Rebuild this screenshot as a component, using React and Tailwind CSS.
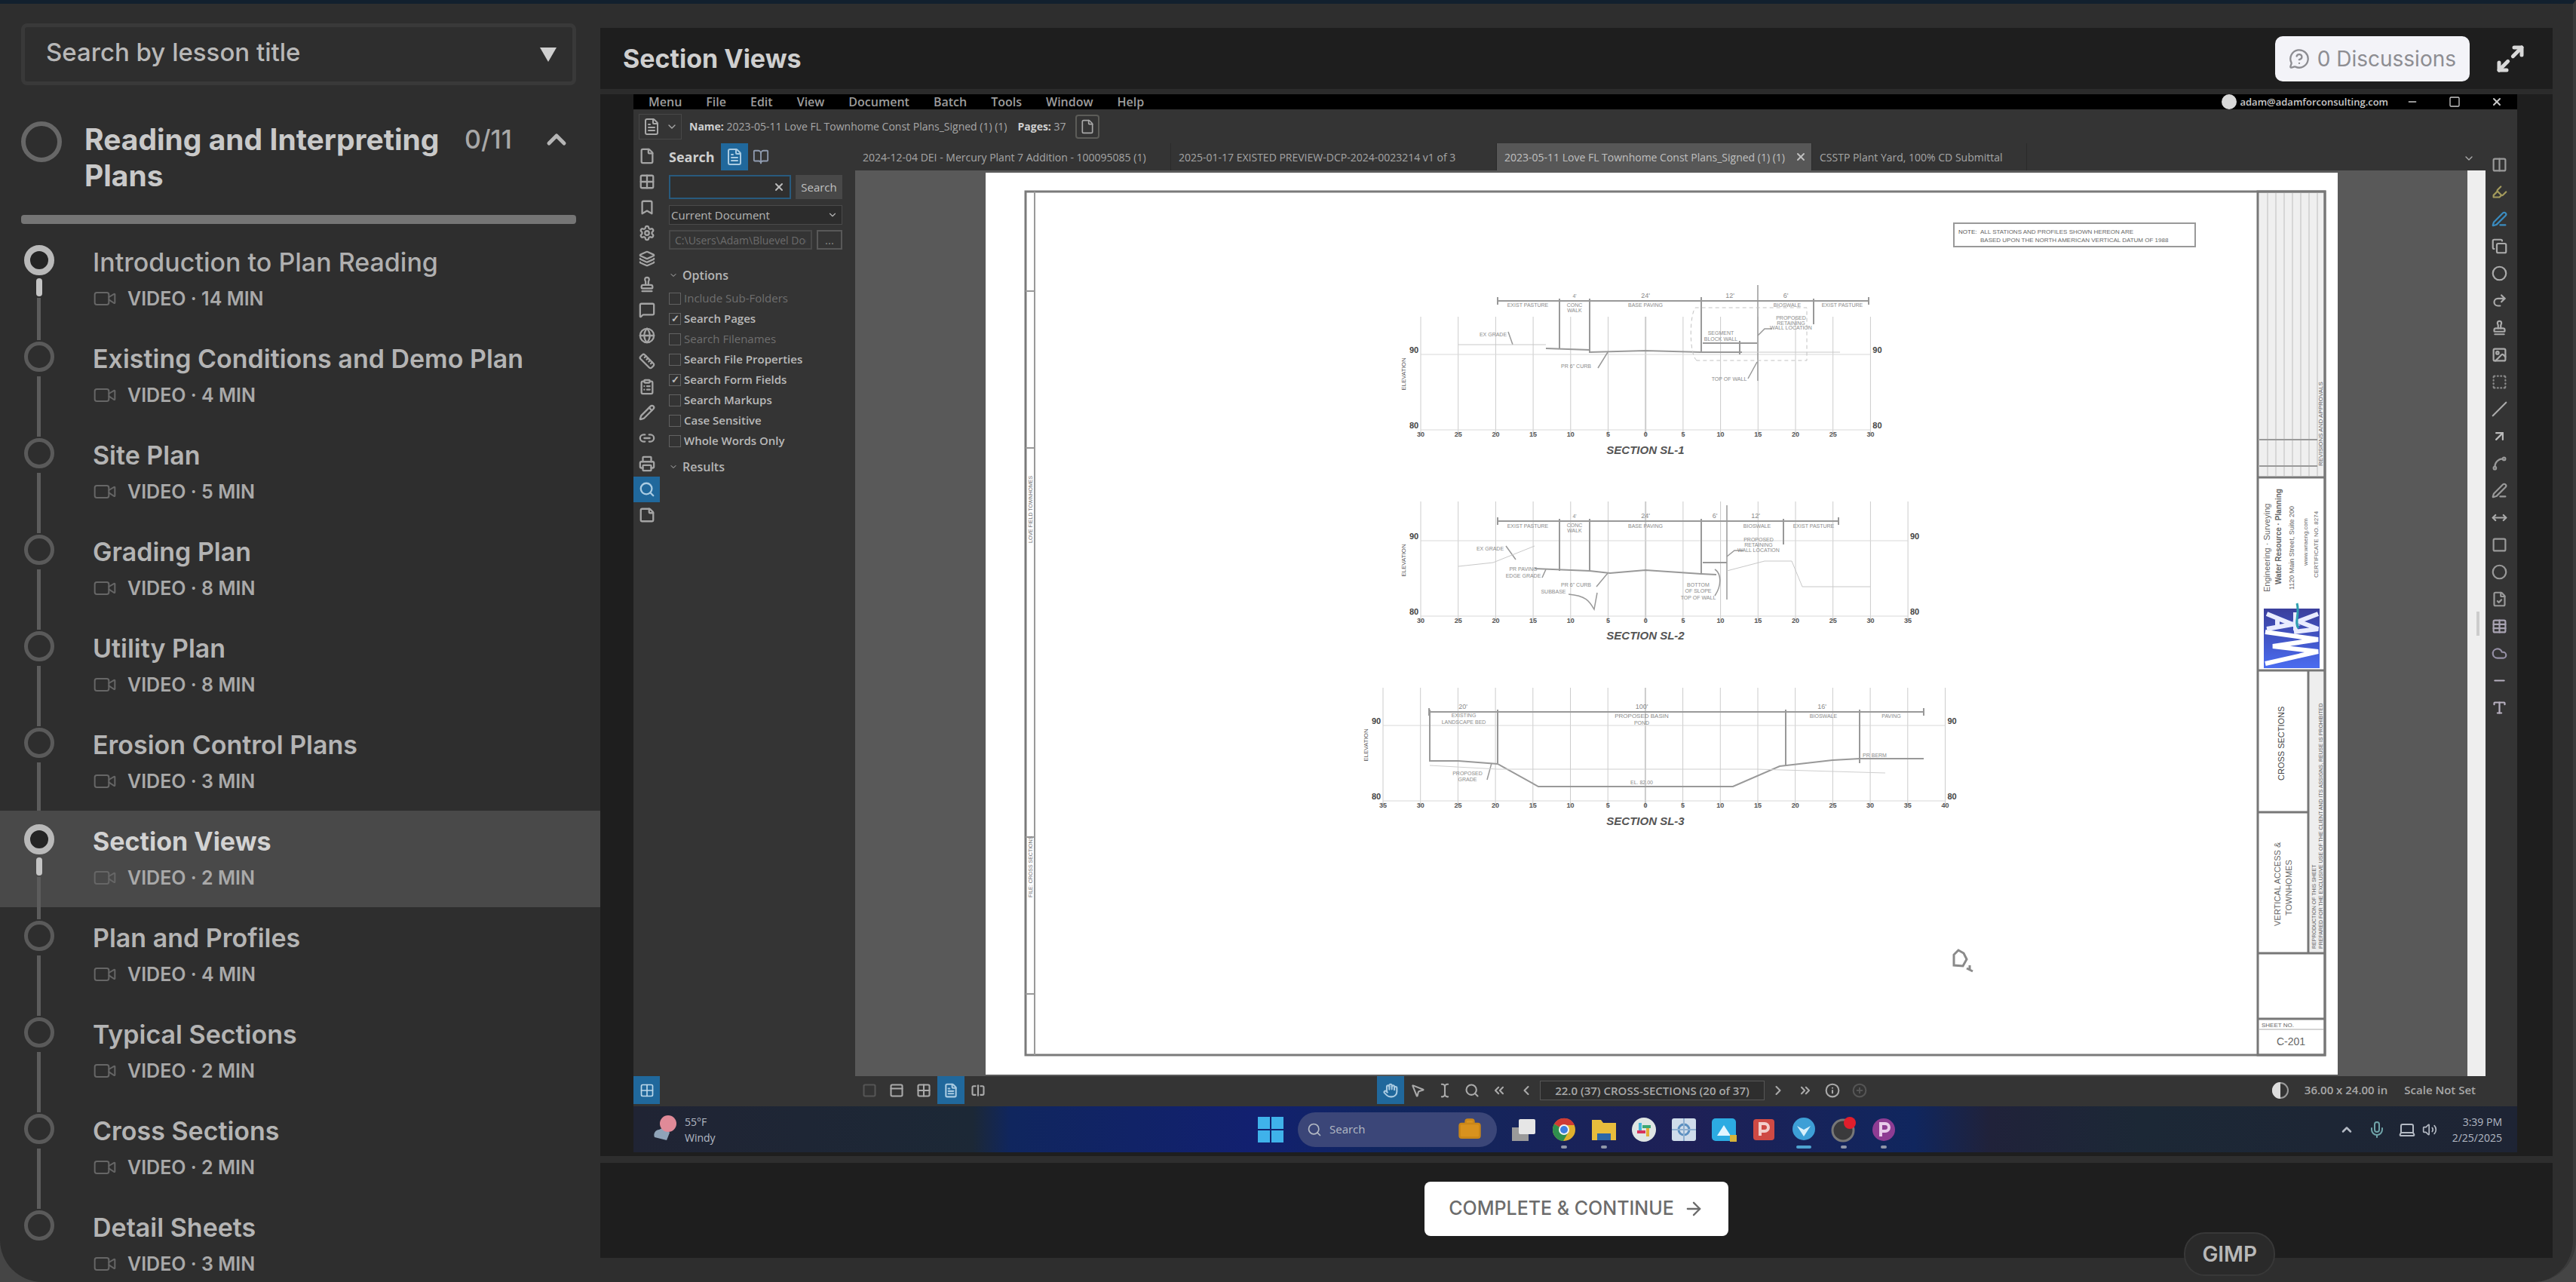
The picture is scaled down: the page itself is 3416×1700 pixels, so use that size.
import React from "react";
import {
  ChevronUp, ChevronDown, Video, ArrowRight, MessageCircleQuestionMark, Maximize2, FileText, File, BookOpen, Grid2x2, Bookmark,
  Layers, Link2, Stamp, MessageSquare, Globe, Ruler, ClipboardList, Pencil, Square, Table, Search, Settings, CirclePlus,
  StickyNote, Highlighter, PenLine, Copy, Circle, Redo2, Image, SquareDashed, Slash, ArrowUpRight, Spline,
  MoveHorizontal, Cloud, FileCheck, Type, Minus, X, Columns2, MousePointer2, TextCursor, ChevronsLeft, ChevronsRight,
  ChevronLeft, ChevronRight, Mic, Laptop, Volume2, Info, Hand, PanelTop, SquareSplitHorizontal, Briefcase, Printer,
} from "lucide-react";

const lessons = [
  ["Introduction to Plan Reading", 14],
  ["Existing Conditions and Demo Plan", 4],
  ["Site Plan", 5],
  ["Grading Plan", 8],
  ["Utility Plan", 8],
  ["Erosion Control Plans", 3],
  ["Section Views", 2],
  ["Plan and Profiles", 4],
  ["Typical Sections", 2],
  ["Cross Sections", 2],
  ["Detail Sheets", 3],
];

function Lesson({ title, minutes, index }) {
  const active = title === "Section Views";
  const bright = active || index === 0;
  const last = index === lessons.length - 1;
  return (
    <li>
      <a href="#lesson" className={"relative flex h-32 gap-[51px] pl-8 " + (active ? "bg-[#494949]" : "")}>
        <span className="flex w-10 shrink-0 flex-col items-center pt-[18px]">
          <span className={"h-10 w-10 shrink-0 rounded-full " + (bright ? "border-8 border-[#b9b9b9] bg-[#242424]" : "border-[5px] border-[#5a5a5a]")} />
          {bright && <span className="mt-1 h-6 w-2 shrink-0 rounded-full bg-[#c4c4c4]" />}
        </span>
        {!last && <span className={"absolute left-[49px] w-[5px] bg-[#5c5c5c] " + (bright ? "top-[88px] h-[56px]" : "top-[64px] h-[80px]")} />}
        <span className="flex flex-col pt-[21px]">
          <span className={"text-[34px] leading-10 " + (active ? "font-bold text-[#d2d2d2]" : index === 0 ? "font-medium text-[#b0b0b0]" : "font-semibold text-[#b4b4b4]")}>{title}</span>
          <span className="mt-2 flex items-center gap-[14px] text-[25px] leading-10 font-semibold text-[#a9a9a9]">
            <Video className="h-8 w-8 text-[#666]" strokeWidth={1.5} />
            <span>VIDEO · {minutes} MIN</span>
          </span>
        </span>
      </a>
    </li>
  );
}

function Sidebar() {
  return (
    <aside className="flex w-[796px] shrink-0 flex-col overflow-hidden pt-[26px]">
      <div className="relative mr-8 ml-7 h-[82px] shrink-0">
        <select aria-label="Search by lesson title" className="h-full w-full appearance-none rounded-lg border-[5px] border-[#393939] bg-transparent pb-1 pl-7 text-[33px] font-medium text-[#b8b8b8]">
          <option>Search by lesson title</option>
        </select>
        <svg className="pointer-events-none absolute top-[30px] right-[25px] h-6 w-6" viewBox="0 0 24 24"><path d="M1 2h22L12 21z" fill="#cfcfcf" /></svg>
      </div>
      <div className="mt-12 flex shrink-0 items-start pr-8 pl-7">
        <span className="h-[54px] w-[54px] shrink-0 rounded-full border-[6px] border-[#676767]" />
        <h2 className="ml-[30px] w-[500px] text-[39px] leading-[48px] font-bold text-[#c9c9c9]">Reading and Interpreting Plans</h2>
        <span className="ml-1 text-[34px] leading-[48px] font-medium text-[#a8a8a8]">0/11</span>
        <button aria-label="Collapse section" className="mt-1 mr-1.5 ml-auto text-[#b5b5b5]"><ChevronUp className="h-10 w-10" strokeWidth={3} /></button>
      </div>
      <div className="mr-8 ml-7 mt-7 h-3 shrink-0 rounded bg-[#757575]" />
      <ul className="mt-2.5">
        {lessons.map(([t, m], i) => <Lesson key={t} title={t} minutes={m} index={i} />)}
      </ul>
    </aside>
  );
}

/* ---------- drawing sheet ---------- */

const xs = (from, n) => Array.from({ length: n }, (_, i) => from + i * 49.7);

function Tiny({ x, y, children, size = 7, anchor = "middle", fill = "#8a8a8a" }) {
  return <text x={x} y={y} fontSize={size} textAnchor={anchor} fill={fill}>{children}</text>;
}

function SectionGrid({ x0, n, top, bottom, refY, name, titleY }) {
  const grid = xs(x0, n);
  const right = grid[n - 1];
  return (
    <g>
      {grid.map((x, i) => (
        <g key={i}>
          <line x1={x} x2={x} y1={top} y2={bottom + 8} stroke="#cccccc" strokeWidth={x > 2180 && x < 2184 ? 2 : 1} />
          <text x={x} y={bottom + 9} fontSize="9" fontWeight="bold" textAnchor="middle" fill="#555">{Math.abs(Math.round((x - 2182) / 49.7)) * 5}</text>
        </g>
      ))}
      <path d={`M${x0} ${refY}H${right}M${x0} ${bottom}H${right}`} stroke="#d8d8d8" fill="none" />
      {[refY, bottom].map((y) => (
        <g key={y} fontSize="11" fontWeight="bold" fill="#444" textAnchor="middle">
          <text x={x0 - 9} y={y - 2}>{y === bottom ? "80" : "90"}</text>
          <text x={right + 9} y={y - 2}>{y === bottom ? "80" : "90"}</text>
        </g>
      ))}
      <text transform={`translate(${x0 - 20} ${(refY + bottom) / 2 - 24}) rotate(-90)`} fontSize="8" textAnchor="middle" fill="#555">ELEVATION</text>
      <text x="2182" y={titleY} fontSize="15" fontWeight="bold" fontStyle="italic" textAnchor="middle" fill="#555">{name}</text>
    </g>
  );
}

function Sheet() {
  return (
    <svg className="h-full max-w-full" viewBox="1307 229 1793 1196" fontFamily="Liberation Sans, sans-serif" role="img" aria-label="Cross section sheet">
      <rect x="1307" y="229" width="1793" height="1196" fill="#fff" />
      <rect x="1360" y="254" width="1723" height="1145" fill="none" stroke="#7a7a7a" strokeWidth="3" />
      <path d="M1372 254V1399M1360 386H1372M1360 594H1372M1360 1110H1372M1360 1318H1372" stroke="#999" strokeWidth="2" />
      <text transform="translate(1369 1190) rotate(-90)" fontSize="7" fill="#777">FILE: CROSS SECTIONS</text>
      <text transform="translate(1369 720) rotate(-90)" fontSize="7" fill="#777">LOVE FIELD TOWNHOMES</text>

      <rect x="2591" y="296" width="320" height="31" fill="none" stroke="#999" strokeWidth="2" />
      <Tiny x={2597} y={310} size={8} anchor="start" fill="#555">NOTE:</Tiny>
      <Tiny x={2626} y={310} size={8} anchor="start" fill="#666">ALL STATIONS AND PROFILES SHOWN HEREON ARE</Tiny>
      <Tiny x={2626} y={321} size={8} anchor="start" fill="#666">BASED UPON THE NORTH AMERICAN VERTICAL DATUM OF 1988</Tiny>

      {/* section 1 */}
      <SectionGrid x0={1884} n={13} top={420} bottom={570} refY={470} name="SECTION SL-1" titleY={602} />
      <g fill="none" stroke="#999" strokeWidth="2">
        <path d="M1986 399H2478M1986 394v10M2478 394v10M2256 394v10" />
        <path d="M2068 396V462M2108 396V467M2256 396V467M2405 396V430" />
        <path d="M2331 378V505" strokeWidth="1.5" />
        <path d="M2050 462L2108 464L2108 467L2182 465L2256 467H2310" />
        <path d="M2258 455H2330M2307 452V470" />
        <path d="M2000 440L2006 457M2119 488L2132 467M2318 502L2330 480M2331 445L2340 436H2350" strokeWidth="1.5" />
      </g>
      <path d="M1934 457H2050M2310 467H2440" stroke="#c8c8c8" fill="none" />
      <path d="M2250 478C2240 470 2240 420 2248 408H2396V478Z" stroke="#c2c2c2" strokeDasharray="5 4" fill="none" />
      <Tiny x={2026} y={407}>EXIST PASTURE</Tiny><Tiny x={2088} y={395}>4'</Tiny><Tiny x={2088} y={407}>CONC</Tiny><Tiny x={2088} y={414}>WALK</Tiny>
      <Tiny x={2182} y={395} size={9}>24'</Tiny><Tiny x={2182} y={407}>BASE PAVING</Tiny><Tiny x={2294} y={395} size={9}>12'</Tiny><Tiny x={2368} y={395} size={9}>6'</Tiny>
      <Tiny x={2370} y={407}>BIOSWALE</Tiny><Tiny x={2443} y={407}>EXIST PASTURE</Tiny><Tiny x={1980} y={446}>EX GRADE</Tiny>
      <Tiny x={2090} y={488}>PR 6" CURB</Tiny><Tiny x={2293} y={505}>TOP OF WALL</Tiny>
      <Tiny x={2375} y={424}>PROPOSED</Tiny><Tiny x={2375} y={431}>RETAINING</Tiny><Tiny x={2375} y={437}>WALL LOCATION</Tiny>
      <Tiny x={2282} y={444}>SEGMENT</Tiny><Tiny x={2282} y={452}>BLOCK WALL</Tiny>

      {/* section 2 */}
      <SectionGrid x0={1884} n={14} top={665} bottom={817} refY={717} name="SECTION SL-2" titleY={848} />
      <g fill="none" stroke="#999" strokeWidth="2">
        <path d="M1986 691H2438M1986 686v10M2438 686v10" />
        <path d="M2068 688V757M2108 688V757M2256 688V760M2365 688V722" />
        <path d="M2290 670V795" strokeWidth="1.5" />
        <path d="M2035 754L2108 757L2135 760L2182 756L2256 761L2276 762M2258 746H2290" />
        <path d="M1997 724L2010 742M2045 766L2050 755M2117 778L2132 760M2080 788C2104 790 2108 798 2114 808L2118 786M2274 790C2284 775 2282 760 2274 755M2290 738L2300 730H2312" strokeWidth="1.5" />
      </g>
      <path d="M1934 751L1980 746L2035 724M2290 757L2340 744H2376L2390 778H2480" stroke="#c8c8c8" fill="none" />
      <Tiny x={2026} y={700}>EXIST PASTURE</Tiny><Tiny x={2088} y={687}>4'</Tiny><Tiny x={2088} y={699}>CONC</Tiny><Tiny x={2088} y={706}>WALK</Tiny>
      <Tiny x={2182} y={687} size={9}>24'</Tiny><Tiny x={2182} y={700}>BASE PAVING</Tiny><Tiny x={2274} y={687} size={9}>6'</Tiny><Tiny x={2328} y={687} size={9}>12'</Tiny>
      <Tiny x={2330} y={700}>BIOSWALE</Tiny><Tiny x={2405} y={700}>EXIST PASTURE</Tiny><Tiny x={1976} y={730}>EX GRADE</Tiny>
      <Tiny x={2332} y={718}>PROPOSED</Tiny><Tiny x={2332} y={725}>RETAINING</Tiny><Tiny x={2332} y={732}>WALL LOCATION</Tiny>
      <Tiny x={2020} y={757}>PR PAVING</Tiny><Tiny x={2020} y={766}>EDGE GRADE</Tiny><Tiny x={2090} y={778}>PR 6" CURB</Tiny><Tiny x={2060} y={787}>SUBBASE</Tiny>
      <Tiny x={2252} y={778}>BOTTOM</Tiny><Tiny x={2252} y={786}>OF SLOPE</Tiny><Tiny x={2252} y={795}>TOP OF WALL</Tiny>

      {/* section 3 */}
      <SectionGrid x0={1834} n={16} top={912} bottom={1062} refY={962} name="SECTION SL-3" titleY={1094} />
      <g fill="none" stroke="#999" strokeWidth="2">
        <path d="M1895 944H2551M1895 939v10M2551 939v10" />
        <path d="M1896 941V1010M1986 941V1012M2368 941V1015M2466 941V1012" />
        <path d="M1896 1009L1934 1009L1986 1013L2040 1043H2298L2360 1016L2430 1008L2466 1006H2551" />
        <path d="M1972 1034L1978 1012" strokeWidth="1.5" />
      </g>
      <path d="M1896 1015L1986 1020H2330L2500 1025" stroke="#cfcfcf" fill="none" />
      <Tiny x={1940} y={940} size={9}>20'</Tiny><Tiny x={1941} y={951}>EXISTING</Tiny><Tiny x={1941} y={960}>LANDSCAPE BED</Tiny>
      <Tiny x={2177} y={940} size={9}>100'</Tiny><Tiny x={2177} y={952} size={8}>PROPOSED BASIN</Tiny><Tiny x={2177} y={961}>POND</Tiny>
      <Tiny x={2416} y={940} size={9}>16'</Tiny><Tiny x={2418} y={952}>BIOSWALE</Tiny><Tiny x={2508} y={952}>PAVING</Tiny><Tiny x={2486} y={1004}>PR BERM</Tiny>
      <Tiny x={1946} y={1028}>PROPOSED</Tiny><Tiny x={1946} y={1036}>GRADE</Tiny><Tiny x={2177} y={1040}>EL. 82.00</Tiny>

      {/* title block */}
      <g fill="none" stroke="#777" strokeWidth="3">
        <rect x="2994" y="254" width="89" height="1145" />
        <path d="M2994 633H3083M2994 889H3083M3061 889V1264M2994 1077H3061M2994 1264H3083M2994 1351H3083" />
      </g>
      <rect x="2996" y="256" width="85" height="375" fill="#efefef" />
      <path d="M3007 256V631M3018 256V631M3029 256V631M3040 256V631M3051 256V631M3062 256V631M3073 256V631" stroke="#bdbdbd" />
      <path d="M2996 583H3073M2996 618H3073" stroke="#9a9a9a" strokeWidth="2" />
      <rect x="3063" y="891" width="18" height="371" fill="#eee" />
      <g fill="#666" fontSize="8">
        <text transform="translate(3080 618) rotate(-90)">REVISIONS AND APPROVALS</text>
        <text transform="translate(3010 785) rotate(-90)" fontSize="11">Engineering · Surveying</text>
        <text transform="translate(3025 775) rotate(-90)" fontSize="10" fontWeight="bold">Water Resource · Planning</text>
        <text transform="translate(3042 782) rotate(-90)" fontSize="9">1120 Main Street, Suite 200</text>
        <text transform="translate(3060 750) rotate(-90)">www.wraeng.com</text>
        <text transform="translate(3074 766) rotate(-90)">CERTIFICATE NO. 8274</text>
        <text transform="translate(3029 1035) rotate(-90)" fontSize="11" fill="#444">CROSS SECTIONS</text>
        <text transform="translate(3024 1228) rotate(-90)" fontSize="11">VERTICAL ACCESS &amp;</text>
        <text transform="translate(3039 1214) rotate(-90)" fontSize="11">TOWNHOMES</text>
        <text transform="translate(3080 1258) rotate(-90)" fontSize="7">PREPARED FOR THE EXCLUSIVE USE OF THE CLIENT AND ITS ASSIGNS, REUSE IS PROHIBITED</text>
        <text transform="translate(3071 1258) rotate(-90)" fontSize="7">REPRODUCTION OF THIS SHEET</text>
        <text x="2999" y="1362">SHEET NO.</text>
        <text x="3038" y="1386" fontSize="14" textAnchor="middle">C-201</text>
      </g>
      <path d="M2996 1365H3081" stroke="#aaa" />
      <defs>
        <linearGradient id="logo" x1="0" y1="0" x2="0" y2="1"><stop offset="0" stopColor="#3b3f9c" /><stop offset="1" stopColor="#4a6cf0" /></linearGradient>
      </defs>
      <rect x="3002" y="807" width="74" height="79" fill="url(#logo)" />
      <path d="M3004 880L3074 864L3014 857L3074 848L3004 838" fill="none" stroke="#fff" strokeWidth="6" />
      <path d="M3006 834L3040 828L3006 814M3020 834V822M3042 838L3074 834L3048 824L3074 814M3044 812V836" fill="none" stroke="#e9ecff" strokeWidth="6" />
      <path d="M3046 800C3050 815 3042 825 3048 833" fill="none" stroke="#2f9fb0" strokeWidth="3" />
      <path d="M2591 1280V1266L2597 1260 2604 1264 2608 1272 2603 1281Z M2608 1284L2616 1288M2612 1280V1286" fill="none" stroke="#8a8a8a" strokeWidth="3" />
    </svg>
  );
}

/* ---------- recorded desktop ---------- */

const menus = ["Menu", "File", "Edit", "View", "Document", "Batch", "Tools", "Window", "Help"];
const railIcons = [File, Grid2x2, Bookmark, Settings, Layers, Stamp, MessageSquare, Globe, Ruler, ClipboardList, Pencil, Link2, Printer, Search, StickyNote];
const toolIcons = [
  [Columns2, "text-[#9a9a9a]"], [Highlighter, "text-[#a39a5c]"], [PenLine, "text-[#3a8cc0]"], [Copy, "text-[#aaa]"], [Circle, "text-[#aaa]"], [Redo2, "text-[#aaa]"],
  [Stamp, "text-[#aaa]"], [Image, "text-[#aaa]"], [SquareDashed, "text-[#888]"], [Slash, "text-[#aaa]"], [ArrowUpRight, "text-[#bbb]"], [Spline, "text-[#999]"],
  [PenLine, "text-[#999]"], [MoveHorizontal, "text-[#aaa]"], [Square, "text-[#999]"], [Circle, "text-[#999]"], [FileCheck, "text-[#999]"], [Table, "text-[#a9a3b3]"],
  [Cloud, "text-[#958fa5]"], [Minus, "text-[#b7b0c0]"], [Type, "text-[#b7b0c0]"],
];
const options = [
  ["Include Sub-Folders", false, true],
  ["Search Pages", true, false],
  ["Search Filenames", false, true],
  ["Search File Properties", false, false],
  ["Search Form Fields", true, false],
  ["Search Markups", false, false],
  ["Case Sensitive", false, false],
  ["Whole Words Only", false, false],
];

function SearchPanel() {
  return (
    <div className="flex w-[254px] shrink-0 flex-col pl-[7px] text-[15px] text-[#b5b5b5]">
      <div className="flex h-[36px] items-center">
        <h3 className="w-[69px] text-[18px] font-bold text-[#cfcfcf]">Search</h3>
        <button aria-label="Text search" className="flex h-[36px] w-9 items-center justify-center bg-[#20689c] text-[#a9cbe2]"><FileText className="h-6 w-6" /></button>
        <button aria-label="Visual search" className="ml-1.5 text-[#8f9bb0]"><BookOpen className="h-[22px] w-[22px]" /></button>
      </div>
      <div className="mt-1.5 flex gap-1.5">
        <div className="relative">
          <input aria-label="Search term" className="h-8 w-[162px] border-2 border-[#285a7d] bg-[#2f2f2f]" />
          <X className="absolute top-2 right-2 h-4 w-4 text-[#bbb]" strokeWidth={3} />
        </div>
        <button className="h-8 w-[62px] bg-[#484848] text-[#c0c0c0]">Search</button>
      </div>
      <div className="relative mt-2 w-[230px]">
        <select aria-label="Search scope" className="h-[26px] w-full appearance-none border border-[#4a4a4a] bg-[#2c2c2c] pl-0.5">
          <option>Current Document</option>
        </select>
        <ChevronDown className="pointer-events-none absolute top-1.5 right-1.5 h-3.5 w-3.5" />
      </div>
      <div className="mt-[7px] flex gap-1.5">
        <input aria-label="Folder" readOnly value="C:\Users\Adam\Bluevel Docs" className="h-[26px] w-[190px] border-2 border-[#484848] bg-transparent px-1.5 text-[14px] text-[#6c6c6c]" />
        <button className="h-[26px] w-[34px] border-2 border-[#585858] leading-none text-[#888]">...</button>
      </div>
      <h4 className="mt-[21px] flex h-[26px] items-center gap-1.5 text-[16px] font-semibold"><ChevronDown className="h-3 w-3" />Options</h4>
      <div className="mt-1">
        {options.map(([label, on, off]) => (
          <label key={label} className={"flex h-[27px] items-center gap-1 whitespace-nowrap " + (off ? "text-[#6f6f6f]" : "font-semibold text-[#b9b9b9]")}>
            <input type="checkbox" defaultChecked={on} disabled={off} className="sr-only" />
            <span className="flex h-4 w-4 items-center justify-center border border-[#626262] text-[13px] leading-none">{on ? "✓" : ""}</span>
            {label}
          </label>
        ))}
      </div>
      <h4 className="mt-2 flex h-[26px] items-center gap-1.5 text-[16px] font-semibold"><ChevronDown className="h-3 w-3" />Results</h4>
    </div>
  );
}

function StatusIcon({ icon: I, label, on, dim }) {
  return (
    <button aria-label={label} className={"flex h-[37px] w-9 items-center justify-center " + (on ? "bg-[#20689c] text-[#a9cbe2]" : dim ? "text-[#555]" : "text-[#aaa]")}>
      <I className="h-5 w-5" strokeWidth={2.5} />
    </button>
  );
}

function StatusBar() {
  return (
    <div className="flex h-10 shrink-0 items-start bg-[#343434] pl-px text-[15px] font-semibold text-[#a8a8a8]">
      <div className="flex flex-1">
        <StatusIcon icon={Square} label="Split" dim />
        <StatusIcon icon={PanelTop} label="Single page" />
        <StatusIcon icon={Grid2x2} label="Side by side" />
        <StatusIcon icon={FileText} label="Scrolling pages" on />
        <StatusIcon icon={SquareSplitHorizontal} label="Fit" />
      </div>
      <div className="mr-[108px] flex items-center">
        <StatusIcon icon={Hand} label="Pan" on />
        <StatusIcon icon={MousePointer2} label="Select" />
        <StatusIcon icon={TextCursor} label="Select text" />
        <StatusIcon icon={Search} label="Zoom" />
        <StatusIcon icon={ChevronsLeft} label="First page" />
        <StatusIcon icon={ChevronLeft} label="Previous page" />
        <input aria-label="Page" readOnly value="22.0 (37) CROSS-SECTIONS (20 of 37)" className="h-[26px] w-[298px] border border-[#565656] bg-[#2e2e2e] text-center" />
        <StatusIcon icon={ChevronRight} label="Next page" />
        <StatusIcon icon={ChevronsRight} label="Last page" />
        <StatusIcon icon={Info} label="Info" />
        <StatusIcon icon={CirclePlus} label="More" dim />
      </div>
      <div className="flex h-[37px] flex-1 items-center justify-end pr-[13px]">
        <svg className="mr-5 h-6 w-6" viewBox="0 0 24 24"><circle cx="12" cy="12" r="10" fill="none" stroke="#999" strokeWidth="2" /><path d="M12 1a11 11 0 0 0 0 22z" fill="#ddd" /></svg>
        <span>36.00 x 24.00 in</span>
        <span className="ml-[22px]">Scale Not Set</span>
      </div>
    </div>
  );
}

const apps = {
  task: <><rect x="1" y="14" width="22" height="18" fill="#9a9a9a" /><rect x="10" y="3" width="22" height="20" rx="2" fill="#e6e6e6" /></>,
  chrome: <><circle cx="17" cy="17" r="15" fill="#e0b02c" /><path d="M17 17L4 9.500A15 15 0 0 1 31 11H17z" fill="#cf3b34" /><path d="M4 9.500A15 15 0 0 0 16 32l7-12-6-3z" fill="#2f8f4e" /><circle cx="17" cy="17" r="7" fill="#f3f3f3" /><circle cx="17" cy="17" r="5" fill="#3f7fe0" /></>,
  folder: <><path d="M1 4h12l3 4h17v23H1z" fill="#e8bd3c" /><path d="M8 22h18v9H8z" fill="#2c67a8" /></>,
  slack: <><circle cx="17" cy="17" r="16" fill="#dfe5e3" /><path d="M12 8v11" stroke="#46b5d8" strokeWidth="4" /><path d="M8 20h11" stroke="#d8325c" strokeWidth="4" /><path d="M15 13h11" stroke="#3ba874" strokeWidth="4" /><path d="M22 15v11" stroke="#e3ae36" strokeWidth="4" /></>,
  panel: <><rect x="1" y="2" width="32" height="30" rx="3" fill="#cfdcea" /><circle cx="17" cy="17" r="7" fill="none" stroke="#5b8fc0" strokeWidth="3" /><path d="M1 17h32M17 2v30" stroke="#8fb0d0" strokeWidth="2" /></>,
  photo: <><rect x="1" y="2" width="32" height="30" rx="5" fill="#2cabe2" /><path d="M8 25l9-14 9 14z" fill="#e2f5ff" /><path d="M25 24h9v9h-9z" fill="#d8b43a" /></>,
  red: <><rect x="3" y="3" width="28" height="28" rx="4" fill="#cf4a44" /><path d="M12 25V9h6a5 5 0 0 1 0 10h-6" fill="none" stroke="#f2cfcb" strokeWidth="4" /></>,
  blue: <><circle cx="17" cy="16" r="15" fill="#3d9fd6" /><path d="M8 12l9 14 9-14-9 5z" fill="#d8f0fb" /></>,
  record: <><circle cx="16" cy="18" r="14" fill="#3a3a3c" stroke="#777" strokeWidth="3" /><circle cx="25" cy="8" r="8" fill="#e01e2c" /></>,
  purple: <><circle cx="17" cy="17" r="15" fill="#8e3c93" /><path d="M13 26V9h6a5 5 0 0 1 0 10h-6" fill="none" stroke="#e8cbea" strokeWidth="4" /></>,
};

function Taskbar() {
  return (
    <div className="flex h-[61px] shrink-0 items-center bg-[linear-gradient(90deg,#202434_0%,#1c2836_18%,#10265e_20%,#122070_33%,#10265e_40%,#1e2056_56%,#10265e_68%,#20223a_72%,#1c2836_80%,#1e2434_100%)] text-[14px] leading-[21px] text-[#b4bac4]">
      <div className="flex flex-1 items-center gap-2 pl-6">
        <svg className="h-10 w-9" viewBox="0 0 36 40"><path d="M4 30a7 7 0 0 1 6-10l8-4 6 8-4 10z" fill="#8fa3b8" /><circle cx="22" cy="12" r="11" fill="#e08a98" /></svg>
        <div><div>55°F</div><div>Windy</div></div>
      </div>
      <div className="flex items-center gap-[18px]">
        <button aria-label="Start"><svg className="h-9 w-9" viewBox="0 0 36 36"><path d="M1 1h16v16H1zM19 1h16v16H19zM1 19h16v16H1zM19 19h16v16H19z" fill="#3fb2ea" /></svg></button>
        <div className="relative flex h-[46px] w-[264px] items-center rounded-full bg-[#3b4678] pl-3">
          <Search className="h-5 w-5" />
          <input aria-label="Search the desktop" placeholder="Search" className="ml-2.5 w-28 bg-transparent text-[15px] placeholder:text-[#b4bac4]" />
          <Briefcase className="ml-auto mr-5 h-8 w-8 text-[#c98618]" fill="#d8921e" />
        </div>
        {Object.entries(apps).map(([name, art]) => (
          <button key={name} aria-label={name} className="relative flex h-[50px] w-[35px] items-center justify-center">
            <svg className="h-[34px] w-[34px]" viewBox="0 0 34 34">{art}</svg>
            {["chrome", "folder", "blue", "record", "purple"].includes(name) && <span className={"absolute bottom-0 h-1 rounded " + (name === "blue" ? "w-5 bg-[#4ea3d0]" : "w-2 bg-[#8f96a8]")} />}
          </button>
        ))}
      </div>
      <div className="flex flex-1 items-center justify-end pr-5">
        <ChevronUp className="mr-[18px] h-5 w-5" strokeWidth={3} />
        <Mic className="mr-[16px] h-6 w-6 text-[#6fa3a8]" />
        <Laptop className="mr-2 h-6 w-6" />
        <Volume2 className="mr-[20px] h-5 w-5" />
        <div className="text-right"><div>3:39 PM</div><div>2/25/2025</div></div>
      </div>
    </div>
  );
}

function Tab({ children, width, active }) {
  return (
    <button className={"flex h-full shrink-0 items-center justify-between overflow-hidden pr-1.5 pl-[10px] whitespace-nowrap border-r border-[#2b2b2b] " + width + (active ? " bg-[#575757] text-[#c0c0c0]" : " text-[#a6a6a6]")}>
      {children}
      {active && <X className="h-4 w-4" strokeWidth={3} />}
    </button>
  );
}

function Desktop() {
  return (
    <div className="flex min-h-0 flex-1 flex-col font-['Open_Sans','Noto_Sans',sans-serif]">
      <div className="flex h-5 shrink-0 items-center bg-black text-[16px] leading-5 font-semibold text-[#9c9c9c]">
        <nav className="flex gap-8 pl-5">
          {menus.map((m) => <button key={m}>{m}</button>)}
        </nav>
        <div className="ml-auto flex items-center text-[#c8c8c8]">
          <span className="mr-1 h-5 w-5 rounded-full bg-[#d8d8d8]" />
          <span className="text-[13px]">adam@adamforconsulting.com</span>
          <Minus className="ml-6 h-4 w-4" /><Square className="ml-10 h-4 w-4" /><X className="ml-10 mr-[19px] h-4 w-4" strokeWidth={3} />
        </div>
      </div>
      <div className="flex h-[45px] shrink-0 items-center bg-[#343434] pl-[7px] text-[14px] text-[#a8a8a8]">
        <div className="flex h-[34px] w-[57px] items-center justify-between border border-[#484848] px-1"><FileText className="h-6 w-6" /><ChevronDown className="h-4 w-4" /></div>
        <p className="ml-2.5 whitespace-nowrap"><b className="text-[#d0d0d0]">Name: </b>2023-05-11 Love FL Townhome Const Plans_Signed (1) (1)</p>
        <p className="ml-3.5 whitespace-nowrap"><b className="text-[#d0d0d0]">Pages: </b>37</p>
        <button aria-label="Document view" className="ml-3 flex h-8 w-8 items-center justify-center rounded border-2 border-[#5c5c58]"><File className="h-5 w-5" /></button>
      </div>
      <div className="flex min-h-0 flex-1 bg-[#343434]">
        <div className="flex w-10 shrink-0 flex-col">
          {railIcons.map((I, i) => (
            <button key={i} aria-label={"Panel " + (i + 1)} className={"flex h-[34px] w-[35px] shrink-0 items-center justify-center " + (i === 13 ? "bg-[#20689c] text-[#a9cbe2]" : "text-[#a4a4a4]")}>
              <I className="h-[22px] w-[22px]" strokeWidth={2.5} />
            </button>
          ))}
          <button aria-label="Settings" className="mt-auto mb-[3px] flex h-[37px] w-[35px] items-center justify-center bg-[#20689c] text-[#bcd8ea]"><Grid2x2 className="h-5 w-5" /></button>
        </div>
        <SearchPanel />
        <div className="flex min-w-0 flex-1 flex-col">
          <div className="flex h-9 shrink-0 text-[14px]">
            <Tab width="w-[419px]">2024-12-04 DEI - Mercury Plant 7 Addition - 100095085 (1)</Tab>
            <Tab width="w-[432px]">2025-01-17 EXISTED PREVIEW-DCP-2024-0023214 v1 of 3</Tab>
            <Tab width="w-[418px]" active>2023-05-11 Love FL Townhome Const Plans_Signed (1) (1)</Tab>
            <Tab width="w-[285px]">CSSTP Plant Yard, 100% CD Submittal</Tab>
            <ChevronDown className="ml-auto mt-3 mr-[14px] h-4 w-4 text-[#aaa]" />
          </div>
          <div className="flex min-h-0 flex-1">
            <div className="flex min-w-0 flex-1 items-center justify-center bg-[#595959] pt-[3px] pb-0.5"><Sheet /></div>
            <div className="flex w-6 shrink-0 items-center justify-end bg-[#eee]"><span className="mr-2 h-8 w-1 bg-[#ccc]" /></div>
          </div>
          <StatusBar />
        </div>
        <div className="flex w-[42px] shrink-0 flex-col items-start pt-2.5">
          {toolIcons.map(([I, c], i) => (
            <button key={i} aria-label={"Tool " + (i + 1)} className={"flex h-[36px] w-9 shrink-0 items-center justify-center " + c}><I className="h-[21px] w-[21px]" strokeWidth={2.5} /></button>
          ))}
        </div>
      </div>
      <Taskbar />
    </div>
  );
}

export default function App() {
  return (
    <div className="h-screen overflow-hidden bg-[#454545] font-['Inter',sans-serif]">
      <div className="relative flex h-full flex-col overflow-hidden rounded-b-[56px] border-t-[5px] border-r-4 border-t-[#12202e] border-r-[#3a3a3a] bg-[#2e2e2e]">
        <div className="flex min-h-0 flex-1">
          <Sidebar />
          <main className="mt-8 mr-[27px] mb-8 flex min-w-0 flex-1 flex-col bg-[#1e1e1e]">
            <header className="flex h-[81px] shrink-0 items-center pr-9 pl-[30px]">
              <h1 className="text-[34px] leading-none font-bold text-[#cfcfcf]">Section Views</h1>
              <button className="ml-auto flex h-[60px] items-center gap-2.5 rounded-[10px] bg-[#f3f3f8] px-[18px] text-[28px] text-[#8d8d92]">
                <MessageCircleQuestionMark className="h-7 w-7" />0 Discussions
              </button>
              <button aria-label="Expand" className="ml-[34px] text-[#d8d8d8]"><Maximize2 className="h-10 w-10" strokeWidth={3} /></button>
            </header>
            <div className="h-[7px] shrink-0 bg-[#2b2b2b]" />
            <section className="flex min-h-0 flex-1 flex-col pr-[47px] pl-[44px]"><Desktop /></section>
            <div className="mt-[5px] h-[9px] shrink-0 bg-[#2e2e2e]" />
            <footer className="flex h-[126px] shrink-0 items-center justify-center">
              <button className="mb-1 flex h-[72px] items-center gap-3 rounded-lg bg-white px-8 text-[25px] font-medium text-[#6c6c6c]">
                COMPLETE &amp; CONTINUE <ArrowRight className="h-7 w-7" />
              </button>
            </footer>
          </main>
        </div>
        <div className="absolute right-[395px] bottom-2 rounded-[28px] border-2 border-[#383838] bg-[#2a2a2a] px-[22px] text-[28px] leading-[54px] font-semibold text-[#b8b8b8]">GIMP</div>
      </div>
    </div>
  );
}
